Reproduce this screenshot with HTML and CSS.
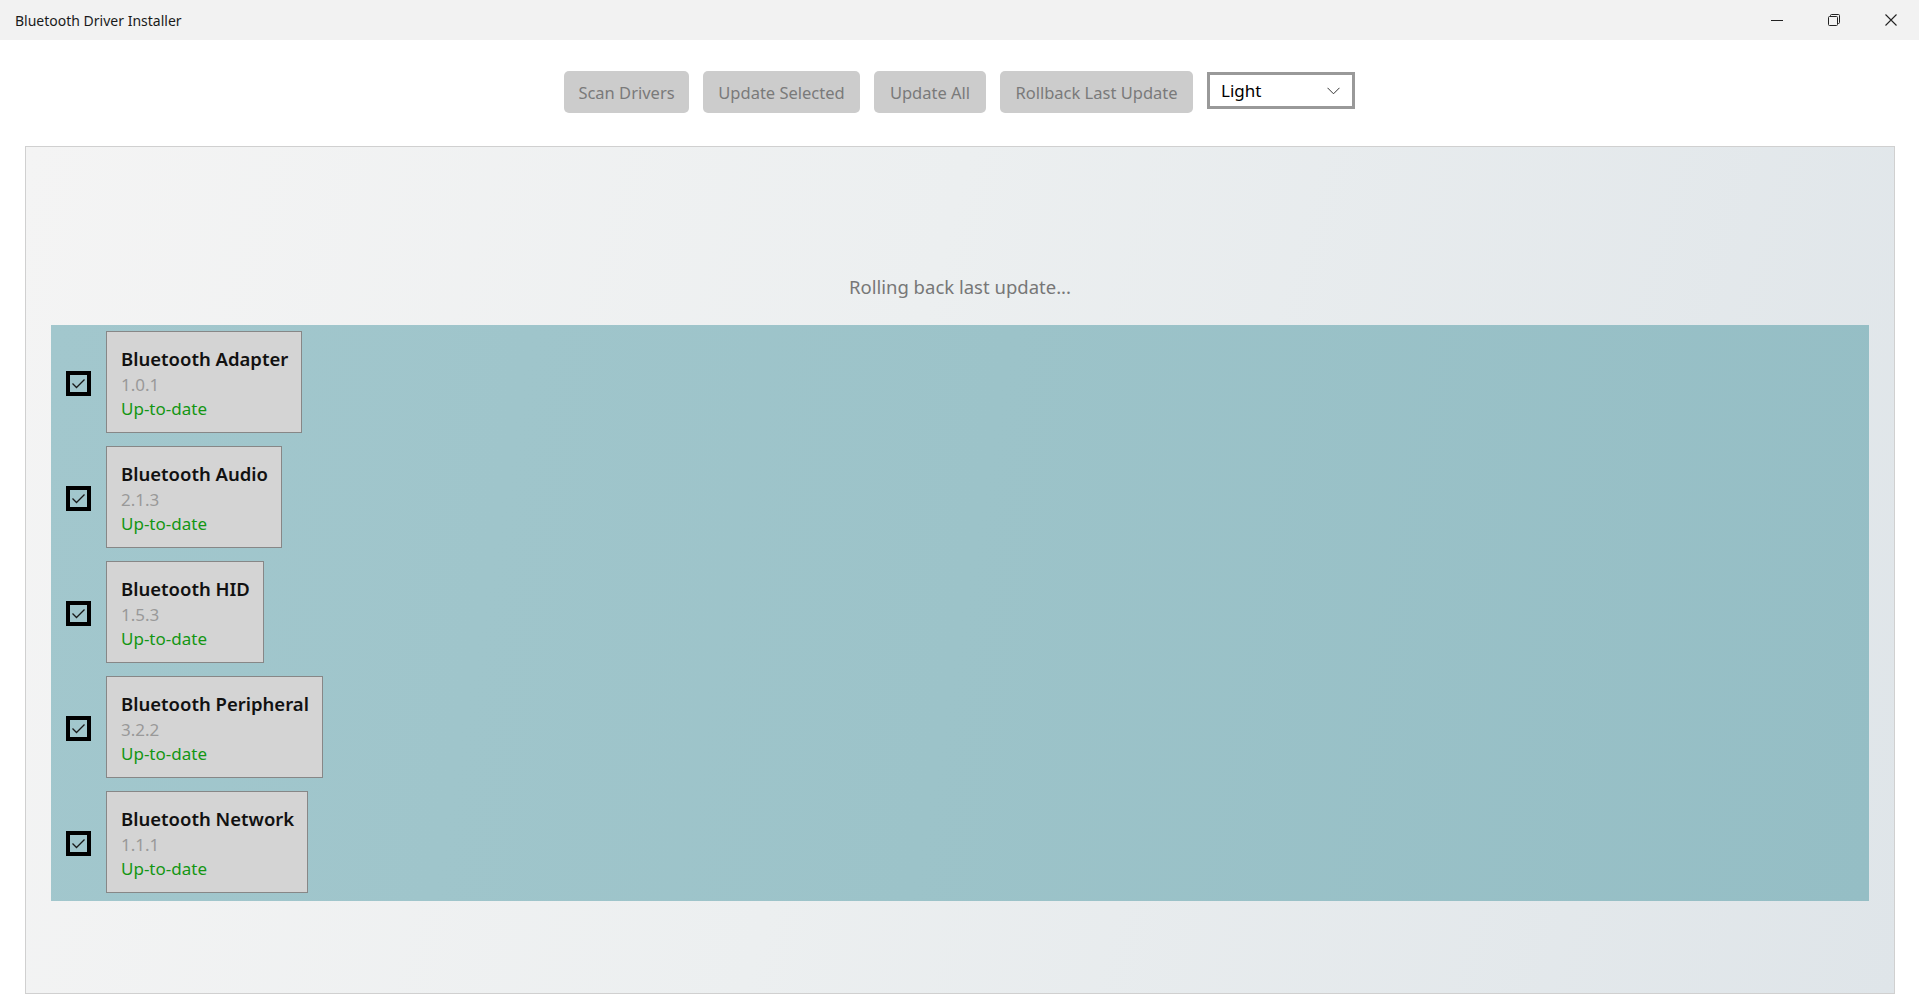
FILE: index.html
```html
<!DOCTYPE html>
<html lang="en">
<head>
  <meta charset="UTF-8" />
  <meta name="viewport" content="width=device-width, initial-scale=1.0" />
  <title>Bluetooth Driver Installer</title>
  <link rel="stylesheet" href="styles.css">
</head>
<body>
  <div class="titlebar">
    <span class="title">Bluetooth Driver Installer</span>
    <div class="controls">
      <span class="ctl">
        <svg width="12" height="12" viewBox="0 0 12 12"><line x1="0" y1="6.5" x2="12" y2="6.5" stroke="#222" stroke-width="1"/></svg>
      </span>
      <span class="ctl">
        <svg width="12" height="12" viewBox="0 0 12 12" fill="none" stroke="#222" stroke-width="1">
          <rect x="0.5" y="2.5" width="9" height="9" rx="1"/>
          <path d="M2.5 2.5 V1.5 a1 1 0 0 1 1 -1 H10.5 a1 1 0 0 1 1 1 V8.5 a1 1 0 0 1 -1 1 H9.5"/>
        </svg>
      </span>
      <span class="ctl">
        <svg width="12" height="12" viewBox="0 0 12 12"><path d="M0.5 0.5 L11.5 11.5 M11.5 0.5 L0.5 11.5" stroke="#222" stroke-width="1.1"/></svg>
      </span>
    </div>
  </div>

  <div class="toolbar">
    <button class="btn w-scan">Scan Drivers</button>
    <button class="btn w-sel">Update Selected</button>
    <button class="btn w-all">Update All</button>
    <button class="btn w-roll">Rollback Last Update</button>
    <div class="select">
      <span>Light</span>
      <svg width="13" height="8" viewBox="0 0 13 8"><path d="M0.5 0.8 L6.5 6.8 L12.5 0.8" fill="none" stroke="#333" stroke-width="1"/></svg>
    </div>
  </div>

  <div class="panel">
    <div class="status">Rolling back last update...</div>
    <div class="list">
      <div class="row">
        <span class="check"><svg width="17" height="17" viewBox="0 0 17 17"><path d="M2.5 8.5 L6.5 12.5 L14.5 4.5" fill="none" stroke="#1a1a1a" stroke-width="1.3"/></svg></span>
        <div class="card">
          <div class="name">Bluetooth Adapter</div>
          <div class="ver">1.0.1</div>
          <div class="state">Up-to-date</div>
        </div>
      </div>
      <div class="row">
        <span class="check"><svg width="17" height="17" viewBox="0 0 17 17"><path d="M2.5 8.5 L6.5 12.5 L14.5 4.5" fill="none" stroke="#1a1a1a" stroke-width="1.3"/></svg></span>
        <div class="card">
          <div class="name">Bluetooth Audio</div>
          <div class="ver">2.1.3</div>
          <div class="state">Up-to-date</div>
        </div>
      </div>
      <div class="row">
        <span class="check"><svg width="17" height="17" viewBox="0 0 17 17"><path d="M2.5 8.5 L6.5 12.5 L14.5 4.5" fill="none" stroke="#1a1a1a" stroke-width="1.3"/></svg></span>
        <div class="card">
          <div class="name">Bluetooth HID</div>
          <div class="ver">1.5.3</div>
          <div class="state">Up-to-date</div>
        </div>
      </div>
      <div class="row">
        <span class="check"><svg width="17" height="17" viewBox="0 0 17 17"><path d="M2.5 8.5 L6.5 12.5 L14.5 4.5" fill="none" stroke="#1a1a1a" stroke-width="1.3"/></svg></span>
        <div class="card">
          <div class="name">Bluetooth Peripheral</div>
          <div class="ver">3.2.2</div>
          <div class="state">Up-to-date</div>
        </div>
      </div>
      <div class="row">
        <span class="check"><svg width="17" height="17" viewBox="0 0 17 17"><path d="M2.5 8.5 L6.5 12.5 L14.5 4.5" fill="none" stroke="#1a1a1a" stroke-width="1.3"/></svg></span>
        <div class="card">
          <div class="name">Bluetooth Network</div>
          <div class="ver">1.1.1</div>
          <div class="state">Up-to-date</div>
        </div>
      </div>
    </div>
  </div>
</body>
</html>
```

FILE: styles.css
```css
* {
  margin: 0;
  padding: 0;
  box-sizing: border-box;
}
body {
  font-family: 'Noto Sans', 'Open Sans', sans-serif;
  background: #fff;
  color: #1a1a1a;
  width: 1919px;
  height: 1007px;
  overflow: hidden;
}
.titlebar {
  height: 40px;
  background: #f2f2f2;
  display: flex;
  align-items: center;
  justify-content: space-between;
}
.title {
  font-size: 14px;
  padding-left: 15px;
  color: #1a1a1a;
}
.controls {
  display: flex;
  height: 100%;
}
.ctl {
  width: 57px;
  display: flex;
  align-items: center;
  justify-content: center;
}
.toolbar {
  display: flex;
  justify-content: center;
  align-items: flex-start;
  gap: 14px;
  padding-top: 31px;
  height: 73px;
}
.btn {
  height: 42px;
  background: #cccccc;
  color: #7a7a7a;
  border: none;
  border-radius: 5px;
  font-family: inherit;
  font-size: 16.5px;
  padding: 0;
}
.w-scan { width: 125px; }
.w-sel { width: 157px; }
.w-all { width: 112px; }
.w-roll { width: 193px; }
.select {
  width: 148px;
  height: 37px;
  border: 3px solid #999;
  background: #fff;
  display: flex;
  align-items: center;
  justify-content: space-between;
  padding: 0 12px 0 11px;
  font-size: 17px;
  color: #000;
  margin-top: 1px;
}
.panel {
  margin: 33px 24px 0 25px;
  height: 848px;
  border: 1.5px solid #d0d0d0;
  background: linear-gradient(105deg, #f4f4f4 0%, #eceff0 45%, #dfe5e9 100%);
  padding: 0 25px;
}
.status {
  text-align: center;
  font-size: 18.5px;
  color: #777;
  line-height: 26px;
  padding-top: 127px;
  margin-bottom: 25px;
}
.list {
  background: linear-gradient(100deg, #a2c7cd 0%, #9cc3c9 50%, #95bec5 100%);
  padding: 6px 0 8px 15px;
  display: flex;
  flex-direction: column;
  gap: 13px;
}
.row {
  display: flex;
  align-items: center;
}
.check {
  width: 25px;
  height: 25px;
  border: 4px solid #000;
  display: flex;
  align-items: center;
  justify-content: center;
  margin-right: 15px;
  margin-top: 2px;
}
.card {
  background: #d4d4d4;
  border: 1.5px solid #878787;
  padding: 14px 13px 0 14px;
  height: 102px;
}
.name {
  font-size: 18.5px;
  font-weight: 600;
  color: #111;
  line-height: 26px;
}
.ver {
  font-size: 17px;
  color: #999;
  line-height: 25px;
}
.state {
  font-size: 17px;
  color: #139613;
  line-height: 24px;
}
```
